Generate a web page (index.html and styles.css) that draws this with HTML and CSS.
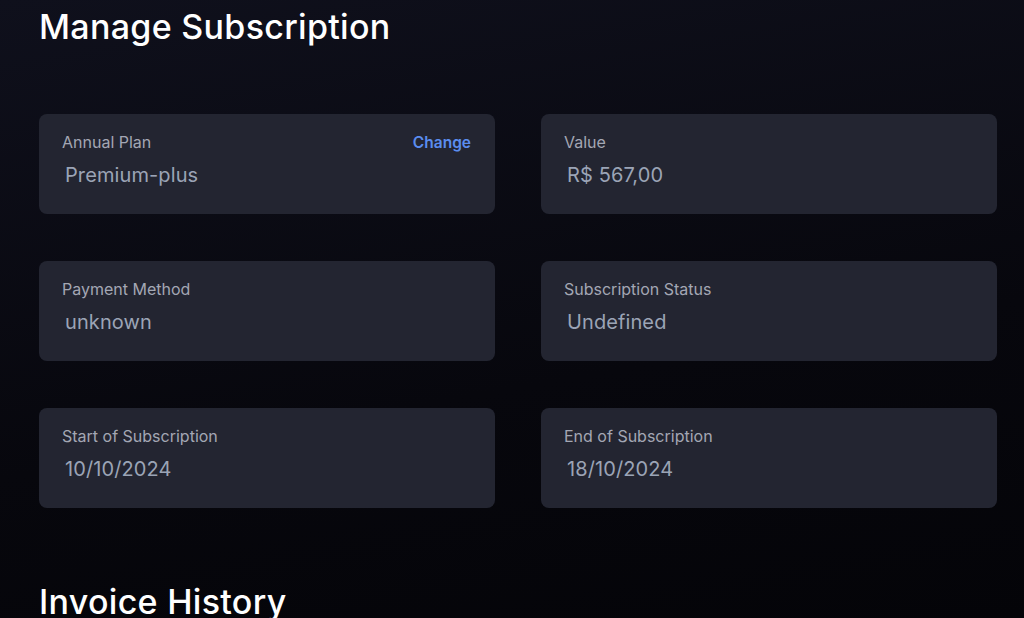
FILE: index.html
```html
<!doctype html>
<html>
  <head>
    <meta charset="utf-8">
    <link rel="stylesheet" href="styles.css">
  </head>
  <body>
    <main class="page">
      <h1 class="title">Manage Subscription</h1>

      <section class="grid">
        <div class="card">
          <div class="card-head">
            <span class="label">Annual Plan</span>
            <a class="change" href="#">Change</a>
          </div>
          <div class="value">Premium-plus</div>
        </div>
        <div class="card">
          <div class="card-head"><span class="label">Value</span></div>
          <div class="value">R$ 567,00</div>
        </div>
        <div class="card">
          <div class="card-head"><span class="label">Payment Method</span></div>
          <div class="value">unknown</div>
        </div>
        <div class="card">
          <div class="card-head"><span class="label">Subscription Status</span></div>
          <div class="value">Undefined</div>
        </div>
        <div class="card">
          <div class="card-head"><span class="label">Start of Subscription</span></div>
          <div class="value">10/10/2024</div>
        </div>
        <div class="card">
          <div class="card-head"><span class="label">End of Subscription</span></div>
          <div class="value">18/10/2024</div>
        </div>
      </section>

      <h1 class="title invoices">Invoice History</h1>
    </main>
  </body>
</html>
```

FILE: styles.css
```css
html, body {
  margin: 0;
  height: 100%;
}

body {
  font-family: Inter, "Noto Sans", sans-serif;
  background: linear-gradient(170deg, #0f101c 0%, #07070d 60%, #040408 100%);
  color: #fff;
  overflow: hidden;
}

.page {
  padding: 0 27px 0 39px;
}

.title {
  margin: 0;
  padding-top: 7px;
  font-size: 34px;
  font-weight: 500;
  letter-spacing: 0.3px;
  line-height: 40px;
  color: #ffffff;
}

.grid {
  display: grid;
  grid-template-columns: 456px 456px;
  column-gap: 46px;
  row-gap: 47px;
  margin-top: 67px;
}

.card {
  background: #232531;
  border-radius: 8px;
  height: 100px;
  box-sizing: border-box;
  padding: 18px 23px 0 23px;
}

.card-head {
  display: flex;
  justify-content: space-between;
  align-items: center;
  height: 20px;
}

.label {
  font-size: 16px;
  color: #a3a7b4;
}

.change {
  font-size: 15.5px;
  font-weight: 600;
  color: #5b8def;
  text-decoration: none;
  margin-right: 1px;
}

.value {
  margin-top: 11px;
  padding-left: 3px;
  font-size: 20px;
  letter-spacing: 0.1px;
  line-height: 24px;
  color: #9ba4b6;
}

.invoices {
  margin-top: 74px;
  padding-top: 0;
}
```
